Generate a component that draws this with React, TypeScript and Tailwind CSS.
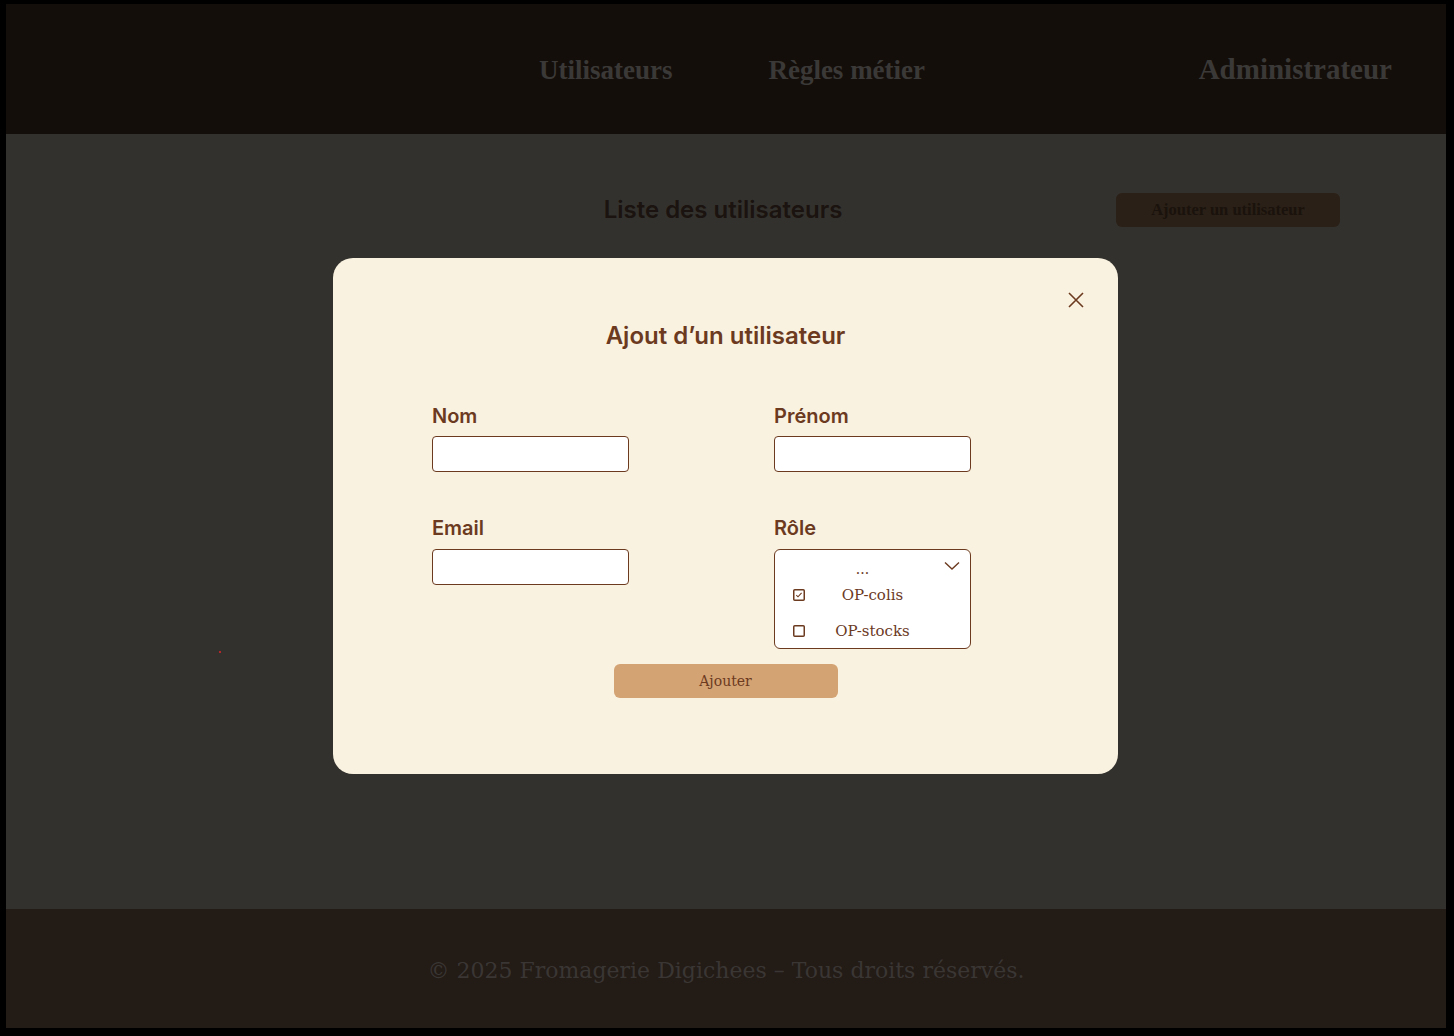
import React from "react";

const serif = { fontFamily: '"DejaVu Serif", "Liberation Serif", serif' };
const lserif = { fontFamily: '"Liberation Serif", "DejaVu Serif", serif' };

function CheckBox({ checked }: { checked?: boolean }) {
  return (
    <svg width="12" height="12" viewBox="0 0 12 12" className="block">
      <rect x="0.75" y="0.75" width="10.5" height="10.5" rx="1" fill="white" stroke="#6b3a1f" strokeWidth="1.5" />
      {checked && <path d="M3.3 6.2 L5 7.8 L8.6 3.9" fill="none" stroke="#6b3a1f" strokeWidth="1.1" />}
    </svg>
  );
}

export default function App() {
  return (
    <div className="bg-black pt-[4px] pl-[6px] pr-[8px] pb-[8px] min-h-screen">
      <div className="relative flex flex-col h-[1024px]">
        <header className="h-[130px] bg-[#140e0a] grid grid-cols-[1fr_auto_1fr] items-center">
          <div />
          <nav className="flex gap-[96px] ml-[12px] pt-[2px] text-[27px] font-bold text-[#3b3937]" style={lserif}>
            <span>Utilisateurs</span>
            <span>Règles métier</span>
          </nav>
          <div className="flex justify-end pr-[54px] pt-[2px]">
            <span className="text-[29px] font-bold text-[#3b3937]" style={lserif}>Administrateur</span>
          </div>
        </header>
        <main className="flex-1 bg-[#33312d] relative">
          <div className="grid grid-cols-[1fr_auto_1fr] items-center pt-[58px]">
            <div />
            <h1 className="text-[24px] font-semibold text-[#1a130f] leading-[36px] -ml-[6px]" style={{ fontFamily: 'Inter, sans-serif' }}>
              Liste des utilisateurs
            </h1>
            <div className="flex justify-end pr-[106px]">
              <button className="w-[224px] h-[34px] rounded-[6px] bg-[#2a2017] text-[#1a120c] text-[16.5px] font-bold" style={lserif}>
                Ajouter un utilisateur
              </button>
            </div>
          </div>
          <div className="absolute left-[213px] top-[517px] w-[2px] h-[2px] bg-[#b3262a]" />
        </main>
        <footer className="h-[119px] bg-[#231b16] flex items-center justify-center pt-[3px]">
          <p className="text-[22px] text-[#3a3634]" style={serif}>
            © 2025 Fromagerie Digichees – Tous droits réservés.
          </p>
        </footer>
      </div>

      <div className="fixed inset-0 flex items-center justify-center">
        <div className="relative w-[785px] h-[516px] -ml-[3px] -mt-[4px] bg-[#faf2e0] rounded-[20px] pt-[62px]" style={{ fontFamily: 'Inter, sans-serif' }}>
          <button className="absolute right-[33px] top-[33px] w-[18px] h-[18px]">
            <svg width="18" height="18" viewBox="0 0 18 18">
              <path d="M2 2 L16 16 M16 2 L2 16" stroke="#6b3a1f" strokeWidth="1.6" />
            </svg>
          </button>
          <h2 className="text-center text-[24px] leading-[32px] font-semibold text-[#6b3a1f]">Ajout d’un utilisateur</h2>
          <div className="grid grid-cols-[342px_197px] pl-[99px] mt-[52px] gap-y-[44px]">
            <div className="flex flex-col gap-[8px]">
              <label className="text-[20px] leading-[24px] font-semibold text-[#6b3a1f]">Nom</label>
              <input className="w-[197px] h-[36px] bg-white border border-[#6b3a1f] rounded-[4px]" />
            </div>
            <div className="flex flex-col gap-[8px]">
              <label className="text-[20px] leading-[24px] font-semibold text-[#6b3a1f]">Prénom</label>
              <input className="w-[197px] h-[36px] bg-white border border-[#6b3a1f] rounded-[4px]" />
            </div>
            <div className="flex flex-col gap-[9px]">
              <label className="text-[20px] leading-[24px] font-semibold text-[#6b3a1f]">Email</label>
              <input className="w-[197px] h-[36px] bg-white border border-[#6b3a1f] rounded-[4px]" />
            </div>
            <div className="flex flex-col gap-[9px]">
              <label className="text-[20px] leading-[24px] font-semibold text-[#6b3a1f]">Rôle</label>
              <div className="w-[197px] h-[100px] bg-white border border-[#6b3a1f] rounded-[6px] text-[#6b3a1f] text-[15px]" style={serif}>
                <div className="flex items-center pl-[10px] pr-[10px] pt-[8px] h-[30px]">
                  <span className="flex-1 text-center leading-[16px] text-[14px]">...</span>
                  <svg width="16" height="10" viewBox="0 0 16 10" className="ml-[4px] -mt-[6px]">
                    <path d="M1 1.5 L8 8 L15 1.5" fill="none" stroke="#6b3a1f" strokeWidth="1.4" />
                  </svg>
                </div>
                <div className="grid grid-cols-[12px_1fr_12px] items-center px-[18px] h-[30px]">
                  <CheckBox checked />
                  <span className="text-center">OP-colis</span>
                  <span />
                </div>
                <div className="grid grid-cols-[12px_1fr_12px] items-center px-[18px] h-[42px]">
                  <CheckBox />
                  <span className="text-center">OP-stocks</span>
                  <span />
                </div>
              </div>
            </div>
          </div>
          <div className="flex justify-center mt-[15px]">
            <button className="w-[224px] h-[34px] rounded-[6px] bg-[#d4a373] text-[#6b3a1f] text-[14px]" style={serif}>
              Ajouter
            </button>
          </div>
        </div>
      </div>
    </div>
  );
}
